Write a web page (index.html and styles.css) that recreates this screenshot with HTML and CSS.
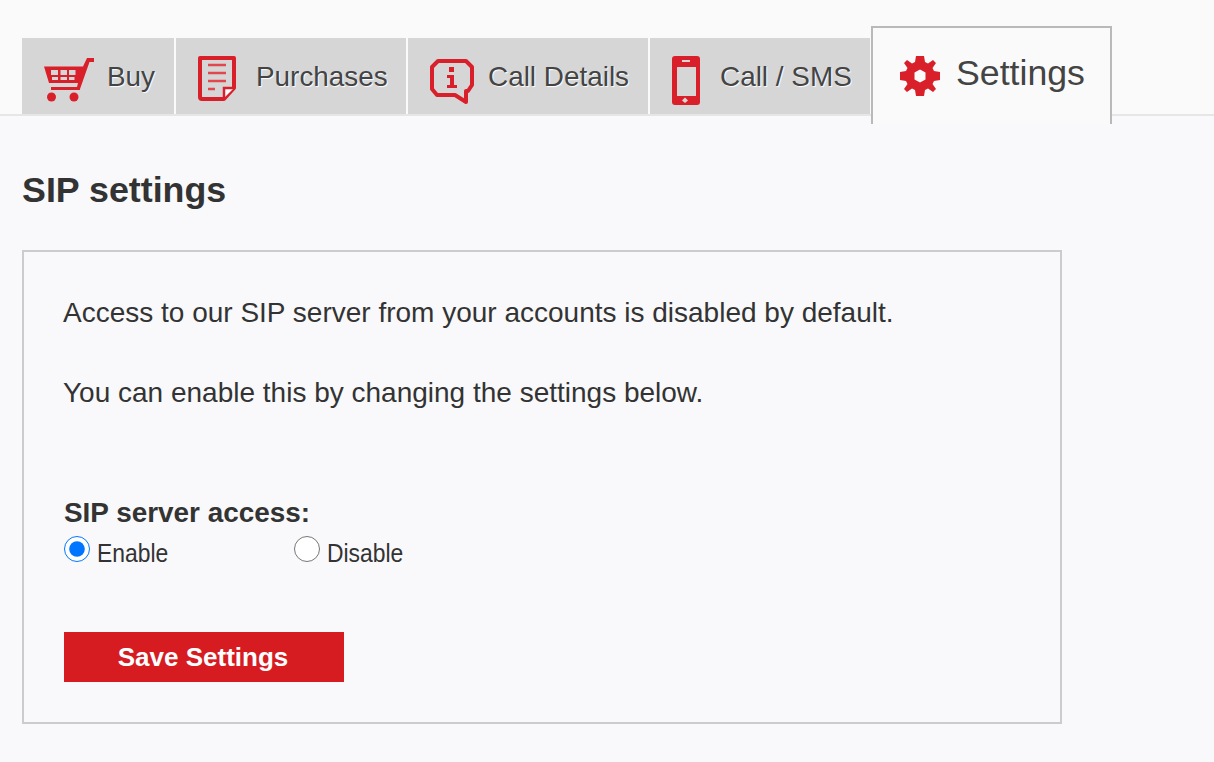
FILE: index.html
```html
<!DOCTYPE html>
<html lang="en">
<head>
<meta charset="utf-8">
<title>SIP settings</title>
<link rel="stylesheet" href="styles.css">
</head>
<body>
<nav class="tabs">
  <a class="tab tab-buy">
    <svg class="icon" width="50" height="46" viewBox="0 0 50 46">
      <path class="fill" fill-rule="evenodd" d="M0 10.500H39L43 2H50V6H45.500L36 33V34H7V31H33L34 27H5ZM7 14V19H14V14ZM16.500 14V19H23V14ZM25 14V19H31.500V14ZM8 21V24H14V21ZM16.500 21V24H23V21ZM25 21V24H30.500V21Z"/>
      <circle class="fill" cx="7.500" cy="41" r="4.500"/>
      <circle class="fill" cx="30" cy="41" r="4.500"/>
    </svg>
    <span class="tab-label">Buy</span>
  </a>
  <a class="tab tab-purchases">
    <svg class="icon" width="38" height="45" viewBox="0 0 38 45">
      <path class="stroke" d="M2 2H36V32L26 43H4Q2 43 2 41Z"/>
      <path class="line" d="M10 9H28M10 17H28M10 25H28M10 33H17"/>
      <path class="fold" d="M26 42V32H36"/>
    </svg>
    <span class="tab-label">Purchases</span>
  </a>
  <a class="tab tab-details">
    <svg class="icon icon-bubble" width="44" height="46" viewBox="0 0 44 46">
      <path class="stroke" d="M8 2H36L42 8V26L38 32H36V43L25 36H7L2 30V8Z"/>
      <path class="fill" d="M19 8H24V13H19ZM17 16H24V26H27V29H17V26H20V19H17Z"/>
    </svg>
    <span class="tab-label">Call Details</span>
  </a>
  <a class="tab tab-sms">
    <svg class="icon" width="28" height="49" viewBox="0 0 28 49">
      <rect class="fill" width="28" height="49" rx="3"/>
      <rect class="screen" x="5" y="11" width="19" height="29"/>
      <rect class="screen" x="10" y="4" width="8" height="2"/>
      <path class="screen" d="M13 41.500L16 44.500L13 47L10 44.500Z"/>
    </svg>
    <span class="tab-label">Call / SMS</span>
  </a>
  <a class="tab tab-settings">
    <svg class="icon" width="40" height="40" viewBox="0 0 40 40">
      <path class="fill" fill-rule="evenodd" d="M16 0H24L25 6L28 7.500L33 4L36 7L32.500 12L34 15L40 16V24L34 25L32.500 28L36 33L33 36L28 32.500L25 34L24 40H16L15 34L12 32.500L7 36L4 33L7.500 28L6 25L0 24V16L6 15L7.500 12L4 7L7 4L12 7.500L15 6ZM20 13.500L14.500 16.500V23.500L20 26.500L25.500 23.500V16.500Z"/>
    </svg>
    <span class="tab-label">Settings</span>
  </a>
</nav>
<main class="content">
  <h1 class="title">SIP settings</h1>
  <form class="panel">
    <p class="text">Access to our SIP server from your accounts is disabled by default.</p>
    <p class="text text-next">You can enable this by changing the settings below.</p>
    <div class="field-label">SIP server access:</div>
    <div class="options">
      <label class="option"><input class="radio" type="radio" name="sip" checked><span class="option-text">Enable</span></label>
      <label class="option"><input class="radio" type="radio" name="sip"><span class="option-text">Disable</span></label>
    </div>
    <button class="save" type="button">Save Settings</button>
  </form>
</main>
</body>
</html>
```
FILE: styles.css
```css
* { box-sizing: border-box; }
html, body { margin: 0; padding: 0; }
body {
  background: #f9f9fb;
  color: #333;
  font-family: "Liberation Sans", Arial, sans-serif;
  height: 762px;
  overflow: hidden;
}
.tabs {
  display: flex;
  align-items: flex-start;
  gap: 2px;
  height: 116px;
  padding: 26px 0 0 22px;
  background: #fafafa;
  border-bottom: 2px solid #e6e6e6;
}
.tab {
  display: flex;
  align-items: flex-start;
  height: 76px;
  margin-top: 12px;
  padding-top: 18px;
  background: #d6d6d6;
  color: #444;
  font-size: 27.900px;
  text-shadow: 1px 1px 1px #fff;
}
.tab-label { line-height: 40px; margin-top: 1px; }
.tab-buy { width: 152px; padding-left: 22px; gap: 13px; }
.tab-purchases { width: 230px; padding-left: 22px; gap: 20px; }
.tab-details { width: 240px; padding-left: 22px; gap: 14px; }
.tab-sms { width: 220px; padding-left: 22px; gap: 20px; }
.tab-settings {
  width: 241px;
  height: 98px;
  margin: 0 0 0 -1px;
  padding: 28px 0 0 27px;
  gap: 16px;
  background: #fafafa;
  border: 2px solid #b9b9b9;
  border-bottom: 0;
  font-size: 35.700px;
  text-shadow: none;
}
.tab-settings .tab-label { margin-top: -3px; }
.icon { flex: none; }
.icon-bubble { margin-top: 3px; }
.fill { fill: #d9202a; }
.stroke { fill: none; stroke: #d9202a; stroke-width: 4; stroke-linejoin: round; }
.line { fill: none; stroke: #e2474d; stroke-width: 2.500; }
.fold { fill: #fff; stroke: #d9202a; stroke-width: 2.500; }
.screen { fill: #d6d6d6; }
.content { padding: 54px 0 0 22px; }
.title {
  margin: 0 0 40px;
  font-size: 35.800px;
  line-height: 40px;
  font-weight: 700;
  color: #333;
}
.panel {
  width: 1040px;
  height: 474px;
  padding: 40px;
  background: #f9f9fb;
  border: 2px solid #ccc;
}
.text { margin: 1px 0 -1px -1px; font-size: 28px; line-height: 40px; color: #333; }
.text-next { margin-top: 41px; }
.field-label { margin: 81px 0 -1px; font-size: 27.900px; line-height: 40px; font-weight: 700; }
.options { display: flex; height: 38px; }
.option { display: flex; align-items: flex-start; width: 230px; height: 38px; }
.radio { width: 26px; height: 26px; margin: 4px 7px 0 0; flex: none; }
.option-text { display: inline-block; margin-top: 3px; font-size: 26px; line-height: 36px; transform: scaleX(.88); transform-origin: left center; color: #333; }
.save {
  display: block;
  width: 280px;
  height: 50px;
  margin-top: 62px;
  padding: 0 2px 0 0;
  border: 0;
  background: #d61c21;
  color: #fff;
  font-family: inherit;
  font-size: 26px;
  font-weight: 700;
}
```
